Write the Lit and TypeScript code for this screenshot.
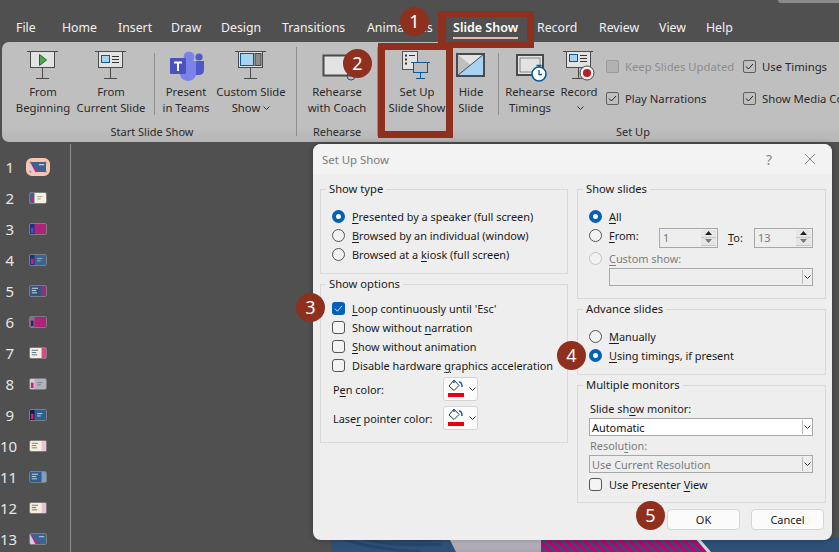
import { LitElement, html, svg, css, nothing } from 'lit';
import { customElement } from 'lit/decorators.js';

const TABS = ['File', 'Home', 'Insert', 'Draw', 'Design', 'Transitions', 'Animations', 'Slide Show', 'Record', 'Review', 'View', 'Help'];

const STROKE = '#4a4a4a';
const BLUE = '#0a5a9a';
const SKY = '#a9d3f2';
const PANE = '#e3e3e3';

// every ribbon icon is drawn in a 40x32 box, the board stands on y=28
const board = (x: number, w: number, inner: unknown, colour = STROKE) => svg`
  <path d="M${x} 1.5H${x + w}" stroke=${colour} fill="none"/>
  <rect x=${x + 3.5} y="1.5" width=${w - 7} height="16" fill=${PANE} stroke=${colour}/>
  <path d="M${x + w / 2} 17.5V28M${x + w / 2 - 6.5} 28.5H${x + w / 2 + 6.5}" stroke=${colour} fill="none"/>
  ${inner}`;

const ICONS: Record<string, unknown> = {
  begin: board(4, 31, svg`<path d="M16.5 4.5L23.5 10L16.5 15.5Z" fill="#4fa84f" stroke="#1c6b1c"/>`),
  current: board(4, 31, svg`
    <rect x="10.5" y="5.5" width="8" height="7" fill=${SKY} stroke=${BLUE}/>
    <path d="M21 6.5H28M21 9.5H28M21 12.5H28" stroke="#333" fill="none"/>`),
  teams: svg`
    <circle cx="23" cy="7" r="5.5" fill="#7b83eb"/>
    <circle cx="33" cy="7" r="3.6" fill="#5059c9"/>
    <path d="M27 11H38V20C38 24 35 25 33 25H27Z" fill="#5059c9"/>
    <path d="M14 11H30V24C30 28 26 31 22 31C18 31 14 28 14 24Z" fill="#7b83eb"/>
    <rect x="4" y="8" width="16" height="16" rx="1" fill="#4b53bc"/>
    <path d="M8 11.5H16V13.5H13V21H11V13.5H8Z" fill="#fff"/>`,
  custom: board(4, 31, svg`
    <rect x="9.5" y="3.5" width="13" height="12" fill=${SKY} stroke=${BLUE}/>
    <rect x="24" y="3.5" width="6" height="12" fill="#8c8c8c" stroke="#444"/>`),
  coach: svg`
    <rect x="6.5" y="5.5" width="28" height="20" fill=${PANE} stroke=${STROKE} stroke-width="2"/>
    <circle cx="34" cy="26" r="4" fill="none" stroke=${BLUE}/>`,
  setup: svg`
    <rect x="5.5" y="1.5" width="15" height="18" fill=${PANE} stroke="#555"/>
    <path d="M8 5.5h2M8 9.5h2M8 13.5h2" stroke="#333" stroke-width="2" fill="none"/>
    <path d="M12 5.5h6" stroke="#333" fill="none"/>
    <rect x="16.5" y="12.5" width="14" height="10" fill="#bdbdbd" stroke=${BLUE}/>
    <path d="M14 12.5H33M23.5 22.5V28M19 28.5H28" stroke=${BLUE} fill="none"/>`,
  hide: svg`
    <path d="M6 4H33V26Z" fill=${PANE}/>
    <path d="M6 26L33 4V26Z" fill=${SKY}/>
    <rect x="6" y="4" width="27" height="22" fill="none" stroke=${STROKE} stroke-width="2"/>
    <path d="M6 26L33 4" stroke=${STROKE} fill="none"/>`,
  timings: svg`
    <rect x="7" y="5" width="26" height="20" fill=${PANE} stroke=${STROKE} stroke-width="2"/>
    <rect x="10" y="8" width="20" height="14" fill=${PANE} stroke=${STROKE} stroke-width="0.6"/>
    <circle cx="29" cy="24" r="7" fill="#fff" stroke=${BLUE} stroke-width="1.6"/>
    <path d="M29 20V24.5H32M26.5 15.5H31.5M29 15.5V17" stroke=${BLUE} fill="none" stroke-width="1.3"/>`,
  record: svg`
    <path d="M4 1.5H34" stroke=${STROKE} fill="none"/>
    <rect x="7.5" y="1.5" width="24" height="16" fill=${PANE} stroke=${STROKE}/>
    <rect x="10.5" y="4.5" width="8" height="7" fill=${SKY} stroke=${BLUE}/>
    <path d="M21 5.5H28M21 8.5H28M21 11.5H28" stroke="#333" fill="none"/>
    <path d="M19.5 17.5V28M13 28.5H23" stroke=${STROKE} fill="none"/>
    <circle cx="28" cy="23" r="7" fill="#eee" stroke=${STROKE}/>
    <circle cx="28" cy="23" r="4" fill="#b3202a"/>`,
};

type Btn = { icon: string; lines: string[]; w: number; menu?: boolean };

const THUMBS = [
  { bg: '#3c6490', left: '#1f3a5e', accent: '#d81b7a', lines: '#fff', tri: true },
  { bg: '#f6f0df', left: '#3c6490', accent: '#d81b7a', lines: '#999' },
  { bg: '#b0237a', left: '#1f2f78', accent: '#3b57c8', lines: '#b0237a' },
  { bg: '#3c6490', left: '#1f2f78', accent: '#d81b7a', lines: '#9db4cc' },
  { bg: '#2f5682', left: '#2f5682', accent: '#b0237a', lines: '#dfe7ef', right: true },
  { bg: '#b0237a', left: '#8a6c90', accent: '#1f2f58', lines: '#b0237a' },
  { bg: '#f6f0df', left: '#f6f0df', accent: '#d81b7a', lines: '#4a6a90', right: true },
  { bg: '#b4b0bd', left: '#d0cdd6', accent: '#d81b7a', lines: '#6a7a96' },
  { bg: '#2f5f90', left: '#10203a', accent: '#d81b7a', lines: '#cfdcea' },
  { bg: '#f6f0df', left: '#f6f0df', accent: '#eeb4d8', lines: '#777', right: true },
  { bg: '#2f5f90', left: '#2f5f90', accent: '#8fb0d0', lines: '#cfdcea', right: true },
  { bg: '#f6f0df', left: '#f6f0df', accent: '#eeb4d8', lines: '#8a5a7a', right: true },
  { bg: '#3c6490', left: '#3c6490', accent: '#d81b7a', lines: '#cfdcea', tri: true },
];

const chevron = svg`<svg class="chev" width="7" height="4" viewBox="0 0 7 4"><path d="M.5 .5L3.5 3.5L6.5 .5" fill="none" stroke="#333"/></svg>`;

@customElement('app-root')
export class AppRoot extends LitElement {
  static styles = css`
    :host {
      display: block;
      position: relative;
      width: 839px;
      height: 552px;
      overflow: hidden;
      background: #505050;
      font-family: "Noto Sans", "Open Sans", sans-serif;
      font-size: 10.9px;
      color: #1a1a1a;
    }

    /* tabs */
    .tabs { height: 42px; position: relative; }
    .tab { position: absolute; top: 19px; font-size: 12.3px; line-height: 18px; color: #f2f2f2; }
    .tab.on { font-weight: 600; color: #fff; font-size: 12.5px; }
    .tab.on::after { content: ""; position: absolute; left: 0; right: 0; top: 18px; height: 2px; background: #f0b9a8; }
    .corner { position: absolute; top: 0; left: 778px; width: 61px; height: 3px; background: #8a8a8a; border-bottom-left-radius: 3px; }

    /* ribbon */
    .ribbon {
      height: 100px;
      margin-left: 2px;
      padding-left: 6px;
      box-sizing: border-box;
      display: flex;
      border-radius: 7px 0 0 7px;
      background: linear-gradient(#bfbfbf 85%, #b6b6b6);
      color: #2a2a2a;
      font-size: 11.3px;
      overflow: hidden;
    }
    .group { display: flex; flex-direction: column; position: relative; flex: none; }
    .group + .group { border-left: 1px solid #8f8f8f; height: 89px; margin-top: 5px; }
    .group + .group .items { margin-top: -5px; }
    .items { display: flex; height: 80px; flex: none; }
    .glabel { height: 20px; line-height: 20px; text-align: center; font-size: 11px; color: #2a2a2a; flex: none; }
    .btn { display: flex; flex-direction: column; align-items: center; padding-top: 8px; box-sizing: border-box; line-height: 16px; text-align: center; white-space: nowrap; flex: none; }
    .btn svg.ico { width: 40px; height: 32px; margin-bottom: 2px; flex: none; }
    .vsep { width: 1px; height: 62px; margin-top: 11px; background: #8f8f8f; flex: none; }
    .chev { margin-left: 3px; vertical-align: 2px; }
    .menu-line { display: block; height: 16px; }
    .checks { display: grid; grid-template-columns: 137px 100px; grid-auto-rows: 32px; padding: 8px 0 0 9px; flex: none; }
    .rcheck { display: flex; align-items: center; gap: 6px; white-space: nowrap; height: 32px; }
    .rbox { width: 11px; height: 11px; border: 1px solid #5e5e5e; border-radius: 2px; flex: none; display: flex; }
    .rcheck.off { color: #8d8d8d; }
    .rcheck.off .rbox { border-color: #9a9a9a; background: #b2b2b2; }
    .spacer-a { width: 10px; flex: none; }
    .spacer-b { width: 12px; flex: none; }
    .g-start { width: 288px; }
    .g-rehearse { width: 80px; }
    .g-setup-label { width: 510px; }

    /* below ribbon */
    .main { display: flex; height: 410px; }
    .thumbs { width: 70px; flex: none; border-right: 1px solid #8d8d8d; padding-top: 9px; margin-top: 2px; }
    .thumbs .row:first-child { margin-top: -2px; }
    .row { height: 31px; display: flex; align-items: center; position: relative; }
    .num { width: 14px; text-align: right; font-size: 15px; color: #e6e6e6; flex: none; }
    .thumb { margin-left: 15px; width: 18px; height: 12px; box-sizing: border-box; border: 1px solid #7d7d7d; border-radius: 2px; display: block; flex: none; }
    .row.sel .thumb { outline: 3px solid #f6c6b0; outline-offset: 0; border-color: #f6c6b0; border-radius: 3px; }
    .stage { flex: 1; padding: 396px 0 0 260px; min-width: 0; }
    .slide { display: block; width: 508px; height: 14px; }

    /* dialog */
    .dialog {
      position: absolute;
      left: 313px;
      top: 144px;
      width: 519px;
      height: 396px;
      border-radius: 8px;
      background: #eeeeee;
      box-shadow: 0 0 6px rgba(0, 0, 0, .3);
    }
    .titlebar { height: 30px; display: flex; align-items: center; padding: 0 16px 0 9px; border-radius: 8px 8px 0 0; background: #f3f3f3; color: #7b7b7b; font-size: 11.4px; }
    .titlebar .grow { flex: 1; }
    .titlebar .help { font-size: 14px; margin-right: 32px; color: #8a8a8a; }
    .cols { display: grid; grid-template-columns: 248px 249px; column-gap: 9px; padding: 8px 7px 0; }
    .col { display: flex; flex-direction: column; gap: 3px; }
    fieldset { margin: 0; padding: 0 10px 0 11px; border: 1px solid #d9d9d9; min-width: 0; box-sizing: border-box; }
    legend { margin-left: -6px; padding: 0 3px; line-height: 14px; height: 14px; font-size: 11.2px; }
    .h-type { height: 92px; padding-top: 11px; }
    .h-options { height: 166px; padding-top: 8px; }
    .h-slides { height: 117px; padding-top: 11px; }
    .h-advance { height: 73px; padding-top: 11px; }
    .h-monitors { height: 125px; padding-top: 8px; }
    .opt { display: flex; align-items: center; height: 19px; white-space: nowrap; }
    .opt .mark { margin-right: 7px; }
    .off { color: #7c7c7c; }
    .radio { width: 13px; height: 13px; box-sizing: border-box; border: 1px solid #555; border-radius: 50%; background: #f2f2f2; flex: none; }
    .radio.on { border: 4px solid #0560b8; background: #fff; }
    .radio.dis { border-color: #c4c4c4; }
    .box { width: 13px; height: 13px; box-sizing: border-box; border: 1px solid #555; border-radius: 3px; background: #f4f4f4; flex: none; display: flex; }
    .box.on { border: none; background: #0560b8; }
    .from { width: 50px; }
    .spin { width: 59px; height: 20px; margin-top: 4px; box-sizing: border-box; border: 1px solid #a8a8a8; display: flex; align-items: center; justify-content: space-between; padding: 0 1px 0 3px; color: #777; }
    .arrows { width: 15px; height: 16px; display: flex; flex-direction: column; }
    .arrows span { flex: 1; display: flex; align-items: center; justify-content: center; background: #e6e6e6; border-bottom: 1px solid #c9c9c9; }
    .to { width: 26px; margin: 4px 0 0 10px; }
    .custom { margin-top: 4px; }
    .select { display: flex; align-items: center; height: 18px; box-sizing: border-box; border: 1px solid #a8a8a8; padding-left: 2px; }
    .select .grow { flex: 1; }
    .select .drop { width: 9px; height: 14px; border-left: 1px solid #bbb; display: flex; align-items: center; justify-content: center; }
    .select .drop .chev { margin: 0; }
    .custom-sel { margin-left: 20px; width: 204px; }
    .wide { width: 224px; }
    .white { background: #fff; color: #111; }
    .mon-label { height: 18px; line-height: 18px; padding-left: 1px; }
    .res-label { margin-top: 1px; }
    .pv { margin-top: 2px; }
    .colour { display: flex; align-items: center; height: 24px; padding-left: 1px; }
    .colour.first { margin-top: 2px; }
    .colour + .colour { margin-top: 5px; }
    .colour .lbl { width: 110px; flex: none; }
    .swatch { width: 35px; height: 24px; box-sizing: border-box; border: 1px solid #d4d4d4; border-radius: 3px; background: #fbfbfb; display: flex; align-items: center; padding-left: 3px; }
    .swatch .chev { margin-left: 3px; vertical-align: 0; }
    .actions { display: flex; justify-content: flex-end; gap: 11px; padding: 6px 8px 0 0; }
    .action { width: 73px; height: 21px; box-sizing: border-box; border: 1px solid #d6d6d6; border-radius: 4px; background: #fbfbfb; text-align: center; line-height: 19px; font-size: 11px; }
    u { text-underline-offset: 2px; }

    /* call-outs */
    .mark-box { position: absolute; box-sizing: border-box; border: 7px solid #8f2f1e; pointer-events: none; }
    .mb1 { left: 438px; top: 11px; width: 96px; height: 37px; border-width: 6px 7px 6px 8px; }
    .mb2 { left: 378px; top: 43px; width: 75px; height: 95px; }
    .badge { position: absolute; width: 29px; height: 29px; border-radius: 50%; background: #8f2f1e; color: #fff; font-size: 18px; line-height: 29px; text-align: center; }
    .b1 { left: 400px; top: 7px; }
    .b2 { left: 343px; top: 49px; }
    .b3 { left: 296px; top: 293px; }
    .b4 { left: 557px; top: 341px; }
    .b5 { left: 636px; top: 501px; }
  `;

  private tabs() {
    const xs = [16, 62, 118, 171, 221, 282, 367, 453, 537, 599, 659, 706];
    return TABS.map((t, i) => html`<span class="tab ${t === 'Slide Show' ? 'on' : ''}" style="left:${xs[i]}px">${t}</span>`);
  }

  private btn(b: Btn) {
    return html`<div class="btn" style="width:${b.w}px">
      <svg class="ico" viewBox="0 0 40 32">${ICONS[b.icon]}</svg>
      ${b.lines.map((l, i) => html`<span class="menu-line">${l}${b.menu && b.lines.length > 1 && i === b.lines.length - 1 ? chevron : nothing}</span>`)}
      ${b.menu && b.lines.length === 1 ? html`<span class="menu-line">${chevron}</span>` : nothing}
    </div>`;
  }

  private thumb(t: (typeof THUMBS)[number]) {
    return html`<svg class="thumb" viewBox="0 0 18 11" preserveAspectRatio="none">
      <rect width="18" height="11" fill=${t.bg}/>
      ${t.right
        ? svg`<rect x="13" width="5" height="11" fill=${t.accent} opacity=".8"/><path d="M2 2.5H9M2 5H7M2 7.5H8" stroke=${t.lines}/>`
        : t.tri
          ? svg`<path d="M0 0L10 11H0Z" fill=${t.accent}/><path d="M0 0L6 11H0Z" fill="#d0d0e0"/><path d="M10 3H16" stroke=${t.lines}/>`
          : svg`<rect width="5" height="11" fill=${t.left}/><rect x="1" y="4" width="3" height="6" fill=${t.accent}/><path d="M8 4H14M8 6.5H12" stroke=${t.lines}/>`}
    </svg>`;
  }

  private radio(label: unknown, state = '') {
    return html`<div class="opt ${state === 'dis' ? 'off' : ''}"><span class="radio mark ${state}"></span><span>${label}</span></div>`;
  }

  private check(label: unknown, on = false) {
    return html`<div class="opt"><span class="box mark ${on ? 'on' : ''}">${on
      ? html`<svg width="13" height="13" viewBox="0 0 13 13"><path d="M3 6.8L5.4 9.2L10 4" fill="none" stroke="#cfe4f7" stroke-width="1"/></svg>`
      : nothing}</span><span>${label}</span></div>`;
  }

  private rcheck(label: string, on = true) {
    return html`<div class="rcheck ${on ? '' : 'off'}"><span class="rbox">${on
      ? html`<svg width="11" height="11" viewBox="0 0 11 11"><path d="M2 5.5L4.4 8L9 3" fill="none" stroke="#222"/></svg>`
      : nothing}</span>${label}</div>`;
  }

  private spin(value: string) {
    const arrow = (d: string, c: string) => html`<span><svg width="7" height="4" viewBox="0 0 7 4"><path d=${d} fill=${c}/></svg></span>`;
    return html`<div class="spin">${value}<div class="arrows">${arrow('M3.5 0L7 4H0Z', '#222')}${arrow('M0 0H7L3.5 4Z', '#777')}</div></div>`;
  }

  private select(text: string, cls: string) {
    return html`<div class="select ${cls}"><span class="grow">${text}</span><span class="drop">${chevron}</span></div>`;
  }

  private swatch() {
    return html`<div class="swatch">
      <svg width="19" height="20" viewBox="0 0 19 20">
        <path d="M7 1L2 7L7 11.5L12 6.5Z" fill="#fff" stroke="#333"/>
        <path d="M7 1V4M12 3C14 3 15 5 15 8" fill="none" stroke="#1c68b4" stroke-width="1.6"/>
        <rect x="1" y="14" width="16" height="4" fill="#e60012"/>
      </svg>${chevron}
    </div>`;
  }

  render() {
    return html`
      <div class="tabs">${this.tabs()}<div class="corner"></div></div>

      <div class="ribbon">
        <div class="group g-start">
          <div class="items">
            ${this.btn({ icon: 'begin', lines: ['From', 'Beginning'], w: 70 })}
            ${this.btn({ icon: 'current', lines: ['From', 'Current Slide'], w: 66 })}
            <div class="spacer-a"></div><div class="vsep"></div>
            ${this.btn({ icon: 'teams', lines: ['Present', 'in Teams'], w: 62 })}
            ${this.btn({ icon: 'custom', lines: ['Custom Slide', 'Show'], w: 68, menu: true })}
          </div>
          <div class="glabel">Start Slide Show</div>
        </div>
        <div class="group g-rehearse">
          <div class="items">${this.btn({ icon: 'coach', lines: ['Rehearse', 'with Coach'], w: 80 })}</div>
          <div class="glabel">Rehearse</div>
        </div>
        <div class="group">
          <div class="items">
            ${this.btn({ icon: 'setup', lines: ['Set Up', 'Slide Show'], w: 78 })}
            ${this.btn({ icon: 'hide', lines: ['Hide', 'Slide'], w: 30 })}
            <div class="spacer-b"></div><div class="vsep"></div>
            ${this.btn({ icon: 'timings', lines: ['Rehearse', 'Timings'], w: 62 })}
            ${this.btn({ icon: 'record', lines: ['Record'], w: 36, menu: true })}
            <div class="checks">
              ${this.rcheck('Keep Slides Updated', false)}
              ${this.rcheck('Use Timings')}
              ${this.rcheck('Play Narrations')}
              ${this.rcheck('Show Media Controls')}
            </div>
          </div>
          <div class="glabel g-setup-label">Set Up</div>
        </div>
      </div>

      <div class="main">
        <div class="thumbs">
          ${THUMBS.map((t, i) => html`<div class="row ${i === 0 ? 'sel' : ''}"><span class="num">${i + 1}</span>${this.thumb(t)}</div>`)}
        </div>
        <div class="stage">
          <svg class="slide" viewBox="0 0 508 14">
            <defs>
              <pattern id="stripes" width="6.4" height="6.4" patternUnits="userSpaceOnUse" patternTransform="rotate(-45)">
                <rect width="6.4" height="6.4" fill="#c4016f"/>
                <rect width="2.8" height="6.4" fill="#2f5178"/>
              </pattern>
              <linearGradient id="grey" x1="0" y1="0" x2="0" y2="1"><stop offset="0" stop-color="#bdbac2"/><stop offset="1" stop-color="#a9a5b0"/></linearGradient>
            </defs>
            <rect width="508" height="14" fill="#2f5178"/>
            <path d="M10 0C30 8 60 12 90 14M30 0C50 6 80 8 110 6M50 0C70 4 90 4 118 0" fill="none" stroke="#27466b" stroke-width="3"/>
            <path d="M118 0H210V14H125Z" fill="url(#grey)"/>
            <path d="M210 0H364L376 14H210Z" fill="url(#stripes)"/>
            <path d="M364 0H368L380 14H376Z" fill="#d9d9d9"/>
          </svg>
        </div>
      </div>

      <div class="dialog">
        <div class="titlebar">
          <span>Set Up Show</span><span class="grow"></span><span class="help">?</span>
          <svg width="12" height="12" viewBox="0 0 12 12"><path d="M1 1L11 11M11 1L1 11" stroke="#888" fill="none"/></svg>
        </div>
        <div class="cols">
          <div class="col">
            <fieldset class="h-type">
              <legend>Show type</legend>
              ${this.radio(html`<u>P</u>resented by a speaker (full screen)`, 'on')}
              ${this.radio(html`<u>B</u>rowsed by an individual (window)`)}
              ${this.radio(html`Browsed at a <u>k</u>iosk (full screen)`)}
            </fieldset>
            <fieldset class="h-options">
              <legend>Show options</legend>
              ${this.check(html`<u>L</u>oop continuously until 'Esc'`, true)}
              ${this.check(html`Show without <u>n</u>arration`)}
              ${this.check(html`<u>S</u>how without animation`)}
              ${this.check(html`Disable hardware <u>g</u>raphics acceleration`)}
              <div class="colour first"><span class="lbl">P<u>e</u>n color:</span>${this.swatch()}</div>
              <div class="colour"><span class="lbl">Lase<u>r</u> pointer color:</span>${this.swatch()}</div>
            </fieldset>
          </div>
          <div class="col">
            <fieldset class="h-slides">
              <legend>Show slides</legend>
              ${this.radio(html`<u>A</u>ll`, 'on')}
              <div class="opt">
                <span class="radio mark"></span><span class="from"><u>F</u>rom:</span>
                ${this.spin('1')}<span class="to"><u>T</u>o:</span>${this.spin('13')}
              </div>
              <div class="custom">${this.radio(html`<u>C</u>ustom show:`, 'dis')}</div>
              ${this.select('', 'custom-sel')}
            </fieldset>
            <fieldset class="h-advance">
              <legend>Advance slides</legend>
              ${this.radio(html`<u>M</u>anually`)}
              ${this.radio(html`<u>U</u>sing timings, if present`, 'on')}
            </fieldset>
            <fieldset class="h-monitors">
              <legend>Multiple monitors</legend>
              <div class="mon-label">Slide sh<u>o</u>w monitor:</div>
              ${this.select('Automatic', 'wide white')}
              <div class="mon-label res-label off">Resolu<u>t</u>ion:</div>
              ${this.select('Use Current Resolution', 'wide off')}
              <div class="pv">${this.check(html`Use Presenter <u>V</u>iew`)}</div>
            </fieldset>
          </div>
        </div>
        <div class="actions"><div class="action">OK</div><div class="action">Cancel</div></div>
      </div>

      <div class="mark-box mb1"></div>
      <div class="mark-box mb2"></div>
      <div class="badge b1">1</div>
      <div class="badge b2">2</div>
      <div class="badge b3">3</div>
      <div class="badge b4">4</div>
      <div class="badge b5">5</div>
    `;
  }
}
